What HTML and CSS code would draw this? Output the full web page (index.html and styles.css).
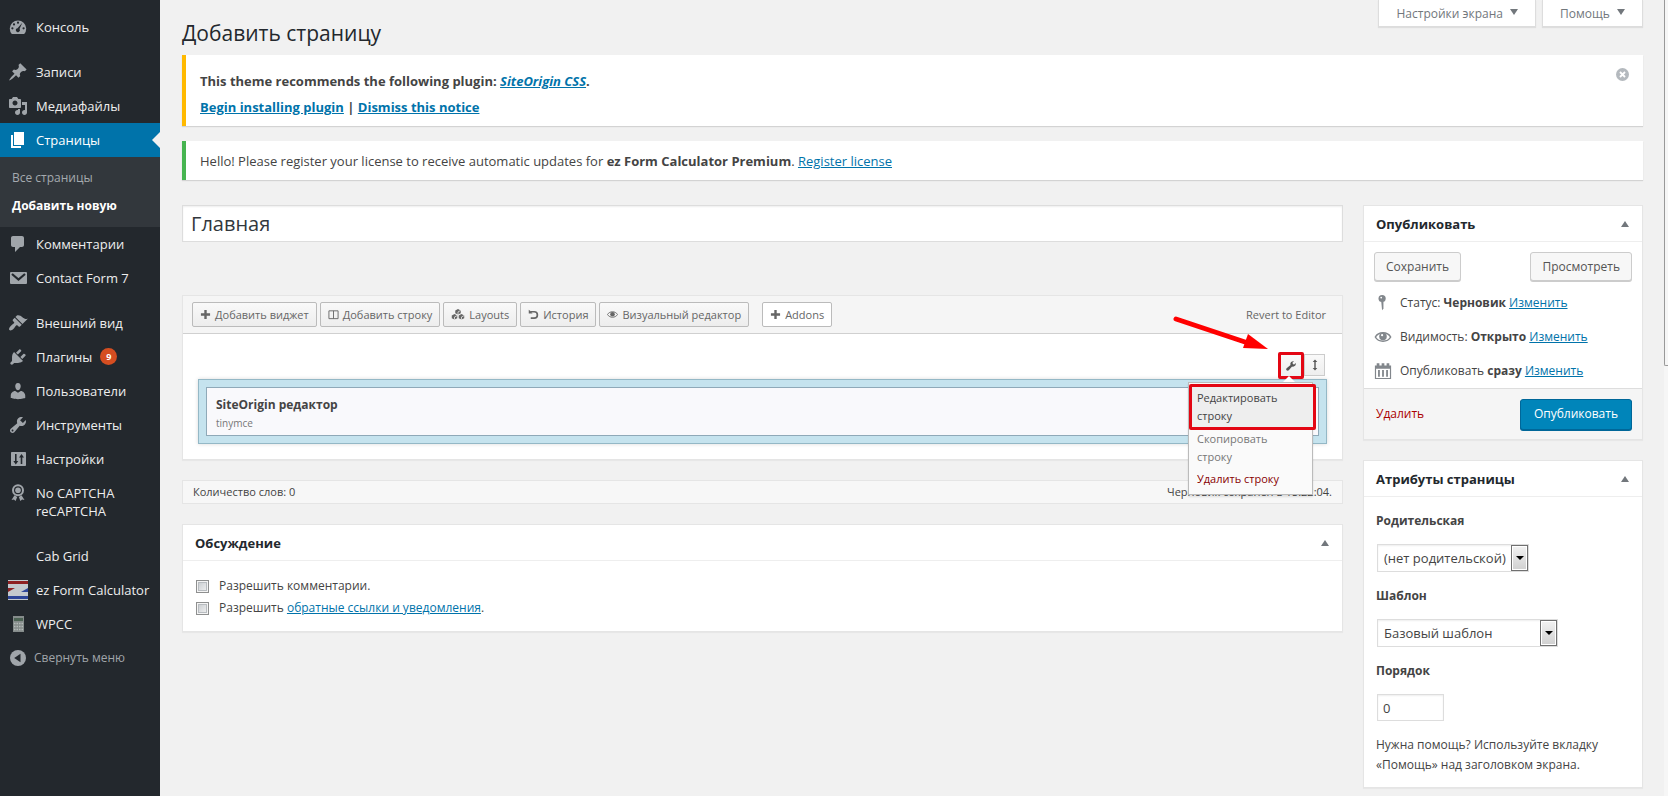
FILE: index.html
```html
<!DOCTYPE html>
<html lang="ru">
<head>
<meta charset="utf-8">
<title>Добавить страницу</title>
<link rel="stylesheet" href="styles.css">
</head>
<body>
<div class="layout">
  <nav class="sidebar" aria-label="Главное меню">
    <ul class="menu">
      <li><a class="menu-link" href="#"><svg class="icon" viewBox="0 0 20 20"><path fill-rule="evenodd" d="M3.8 17h12.4a8.2 8.2 0 1 0-12.4 0zM10 4.6a1.1 1.1 0 1 1 0 2.2 1.1 1.1 0 0 1 0-2.2zM6 6.3a1.1 1.1 0 1 1 0 2.2 1.1 1.1 0 0 1 0-2.2zM4.400 10.200a1.100 1.100 0 1 1 0 2.200 1.100 1.100 0 0 1 0-2.200zM15.600 10.200a1.100 1.100 0 1 1 0 2.200 1.100 1.100 0 0 1 0-2.200zM14.300 5.800l-2.800 6.200a2 2 0 1 1-2-.8z"/></svg><span>Консоль</span></a></li>
      <li class="group"><a class="menu-link" href="#"><svg class="icon" viewBox="0 0 20 20"><path d="M10.440 3.020l1.820-1.820 6.360 6.350-1.830 1.820c-1.050-.68-2.480-.57-3.410.36l-.75.75c-.92.93-1.040 2.350-.35 3.410l-1.830 1.820-2.410-2.410-2.800 2.790c-.42.42-3.380 2.710-3.800 2.290s1.860-3.390 2.280-3.810l2.790-2.790L4.100 9.360l1.830-1.820c1.050.69 2.480.57 3.400-.36l.75-.75c.93-.92 1.050-2.350.36-3.410z"/></svg><span>Записи</span></a></li>
      <li><a class="menu-link" href="#"><svg class="icon" viewBox="0 0 20 20"><path fill-rule="evenodd" d="M13 11V4c0-.55-.45-1-1-1h-1.670L9 1H5L3.670 3H2c-.55 0-1 .45-1 1v7c0 .55.45 1 1 1h10c.55 0 1-.45 1-1zM7 4.500c1.380 0 2.500 1.120 2.500 2.500S8.380 9.500 7 9.500 4.500 8.380 4.500 7 5.620 4.500 7 4.500zM14 6h5v10.500c0 1.380-1.120 2.500-2.500 2.500S14 17.880 14 16.500s1.120-2.500 2.500-2.500c.17 0 .34.02.5.05V9h-3V6zm-4 8.050V13h2v3.500c0 1.380-1.120 2.500-2.500 2.500S7 17.880 7 16.500 8.120 14 9.500 14c.17 0 .34.02.5.05z"/></svg><span>Медиафайлы</span></a></li>
      <li>
        <a class="menu-link current" href="#"><svg class="icon" viewBox="0 0 20 20"><path d="M6 15V2h10v13H6zm-1 1h8v2H3V5h2v11z"/></svg><span>Страницы</span></a>
        <ul class="submenu">
          <li><a href="#">Все страницы</a></li>
          <li><a class="active" href="#">Добавить новую</a></li>
        </ul>
      </li>
      <li><a class="menu-link" href="#"><svg class="icon" viewBox="0 0 20 20"><path d="M5 2h9c1.100 0 2 .9 2 2v7c0 1.100-.9 2-2 2h-2l-5 5v-5H5c-1.100 0-2-.9-2-2V4c0-1.100.9-2 2-2z"/></svg><span>Комментарии</span></a></li>
      <li><a class="menu-link" href="#"><svg class="icon" viewBox="0 0 20 20"><rect x="2" y="4" width="17" height="12" rx="1"/><path d="M4 6l6.500 5.500L17 6" fill="none" stroke="#23282d" stroke-width="2.200"/></svg><span>Contact Form 7</span></a></li>
      <li class="group"><a class="menu-link" href="#"><svg class="icon" viewBox="0 0 20 20"><path d="M14.480 11.060L7.410 3.990l1.500-1.500c.5-.56 2.300-.47 3.510.32 1.210.8 1.430 1.280 2.910 2.100 1.180.64 2.450 1.260 4.450.85zm-.71.71L6.700 4.700 4.930 6.470c-.39.39-.39 1.020 0 1.410l1.060 1.060c.39.39.39 1.030 0 1.420-.6.6-1.430 1.110-2.210 1.690-.35.26-.7.53-1.010.84C1.430 14.230.4 16.080 1.400 17.070c.99 1 2.840-.03 4.180-1.360.31-.31.58-.66.85-1.020.57-.78 1.080-1.610 1.690-2.210.39-.39 1.020-.39 1.410 0l1.060 1.060c.39.39 1.020.39 1.410 0z"/></svg><span>Внешний вид</span></a></li>
      <li><a class="menu-link" href="#"><svg class="icon" viewBox="0 0 20 20"><path d="M13.110 4.360L9.870 7.600 8 5.730l3.240-3.240c.35-.34 1.050-.2 1.560.32.52.51.66 1.210.31 1.550zm-8 1.770l.91-1.120 9.010 9.010-1.190.84c-.71.71-2.630 1.160-3.820 1.160H6.140L4.900 17.260c-.59.59-1.540.59-2.120 0-.59-.58-.59-1.530 0-2.120l1.240-1.240v-3.880c0-1.130.4-3.190 1.090-3.890zm7.260 3.970l3.240-3.240c.34-.35 1.040-.21 1.550.31.52.51.66 1.210.31 1.550l-3.240 3.250z"/></svg><span>Плагины</span><span class="badge">9</span></a></li>
      <li><a class="menu-link" href="#"><svg class="icon" viewBox="0 0 20 20"><path d="M10 9.250c-2.270 0-2.730-3.440-2.730-3.440C7 4.020 7.820 2 9.970 2c2.160 0 2.980 2.020 2.710 3.810 0 0-.41 3.440-2.680 3.440zm0 2.570L12.720 10c2.390 0 4.520 2.330 4.520 4.530v2.490s-3.650 1.130-7.240 1.130c-3.650 0-7.240-1.130-7.240-1.130v-2.490c0-2.250 1.940-4.480 4.470-4.480z"/></svg><span>Пользователи</span></a></li>
      <li><a class="menu-link" href="#"><svg class="icon" viewBox="0 0 20 20"><path fill-rule="evenodd" d="M16.680 9.770c-1.340 1.340-3.300 1.670-4.950.99l-5.410 6.520c-.99.99-2.590.99-3.580 0s-.99-2.590 0-3.570l6.520-5.420c-.68-1.650-.35-3.610.99-4.950 1.280-1.280 3.120-1.620 4.720-1.060l-2.890 2.890 2.820 2.820 2.860-2.870c.53 1.580.18 3.390-1.080 4.650zM3.810 16.210c.4.39 1.040.39 1.430 0 .4-.4.4-1.040 0-1.430-.39-.4-1.030-.4-1.430 0-.39.39-.39 1.030 0 1.430z"/></svg><span>Инструменты</span></a></li>
      <li><a class="menu-link" href="#"><svg class="icon" viewBox="0 0 20 20"><path fill-rule="evenodd" d="M18 16V4c0-.55-.45-1-1-1H4c-.55 0-1 .45-1 1v12c0 .55.45 1 1 1h13c.55 0 1-.45 1-1zM7 5h1.600v7h1.700l-2.500 3.500L5.300 12H7zM12.700 15V8.500H11L13.500 5 16 8.500h-1.700V15z"/></svg><span>Настройки</span></a></li>
      <li><a class="menu-link" href="#"><svg class="icon" viewBox="0 0 20 20"><circle cx="10" cy="7.200" r="5" fill="none" stroke="currentColor" stroke-width="2"/><circle cx="10" cy="7.200" r="2.800"/><path d="M6.500 12.300l2.700 1.600L7.600 18l-1.700-1.400L3.500 17zM13.500 12.300l-2.700 1.600 1.600 4.100 1.700-1.400 2.400.4z"/></svg><span>No CAPTCHA reCAPTCHA</span></a></li>
      <li class="group"><a class="menu-link" href="#"><span class="icon"></span><span>Cab Grid</span></a></li>
      <li><a class="menu-link" href="#"><svg class="icon" viewBox="0 0 20 20"><path fill="#c3c9ce" d="M0 0h20v20H0z"/><path fill="#8e2022" d="M0 1h20v3H0zM0 8h7l-7 4z"/><path fill="#2c4598" d="M0 16h20v3H0zM20 8v4h-7z"/></svg><span>ez Form Calculator</span></a></li>
      <li><a class="menu-link" href="#"><svg class="icon" viewBox="0 0 20 20"><path fill="#858c8b" d="M5 2h11v16H5z"/><path fill="#4c6354" d="M6 4h9v3H6z"/><path d="M6 9.500h9M6 12.500h9M6 15.500h9" stroke="#b4bab9" stroke-width="1.500" stroke-dasharray="1.500 1"/></svg><span>WPCC</span></a></li>
    </ul>
    <button class="menu-link collapse" type="button"><svg class="icon" viewBox="0 0 20 20"><circle cx="10" cy="10" r="8"/><path d="M12.500 5.800v8.400L6.200 10z" fill="#23282d"/></svg><span>Свернуть меню</span></button>
  </nav>

  <main class="content">
    <header class="page-head">
      <h1>Добавить страницу</h1>
      <div class="screen-links">
        <button type="button">Настройки экрана <i class="tri down"></i></button>
        <button type="button">Помощь <i class="tri down"></i></button>
      </div>
    </header>

    <section class="notice warning">
      <div>
        <p>This theme recommends the following plugin: <a href="#"><em>SiteOrigin CSS</em></a>.</p>
        <p><a href="#">Begin installing plugin</a> | <a href="#">Dismiss this notice</a></p>
      </div>
      <button class="dismiss" type="button" aria-label="Скрыть"><svg viewBox="0 0 14 14"><circle cx="7" cy="7" r="7"/><path d="M4.300 4.300l5.400 5.400M9.700 4.300L4.300 9.700" stroke="#fff" stroke-width="2"/></svg></button>
    </section>
    <section class="notice success">
      <p>Hello! Please register your license to receive automatic updates for <strong>ez Form Calculator Premium</strong>. <a href="#">Register license</a></p>
    </section>

    <div class="columns">
      <div class="primary">
        <input class="title-input" type="text" value="Главная" aria-label="Заголовок">

        <section class="builder">
          <div class="toolbar">
            <button type="button"><svg viewBox="0 0 12 12"><path d="M4.700 1h2.600v3.700H11v2.600H7.300V11H4.700V7.300H1V4.700h3.700z"/></svg>Добавить виджет</button>
            <button type="button"><svg viewBox="0 0 12 12"><path d="M1 2h10v8.500H1zM6 2v8.500" fill="none" stroke="currentColor"/></svg>Добавить строку</button>
            <button type="button"><svg class="wide" viewBox="0 0 14 12"><path d="M7 0l3 1.500v3L7 6 4 4.500v-3zM3.200 5.500l3 1.500v3l-3 1.500-3-1.500V7zM10.800 5.500l3 1.500v3l-3 1.500-3-1.500V7z"/><path d="M7 3.200l2.800-1.500M7 3.200V6M3.200 8.700L6 7.200M3.200 8.700v2.800M10.800 8.700l2.800-1.500M10.800 8.700v2.800" fill="none" stroke="#f7f7f7" stroke-width=".8"/></svg>Layouts</button>
            <button type="button"><svg viewBox="0 0 12 12"><path d="M2.500 3h4.300a3.400 3.400 0 0 1 0 6.900H3" fill="none" stroke="currentColor" stroke-width="1.800"/><path d="M.8.8l1.500 1L5 4.800H.8z"/></svg>История</button>
            <button type="button"><svg viewBox="0 0 12 12"><path d="M.5 6C3 2 9 2 11.500 6 9 10 3 10 .5 6z" fill="none" stroke="currentColor"/><circle cx="6" cy="5.700" r="2.500"/></svg>Визуальный редактор</button>
            <button class="plain" type="button"><svg viewBox="0 0 12 12"><path d="M4.700 1h2.600v3.700H11v2.600H7.300V11H4.700V7.300H1V4.700h3.700z"/></svg>Addons</button>
            <a class="revert" href="#">Revert to Editor</a>
          </div>
          <div class="canvas">
            <div class="row-tools">
              <button class="wrench" type="button" aria-label="Параметры строки"><svg viewBox="0 0 20 20"><path d="M16.680 9.770c-1.340 1.340-3.300 1.670-4.950.99l-5.410 6.520c-.99.99-2.590.99-3.580 0s-.99-2.590 0-3.570l6.520-5.420c-.68-1.650-.35-3.610.99-4.950 1.280-1.280 3.120-1.620 4.720-1.060l-2.890 2.890 2.820 2.820 2.860-2.870c.53 1.580.18 3.390-1.080 4.650z"/></svg></button>
              <button type="button" aria-label="Переместить строку"><svg viewBox="0 0 12 12"><path d="M6 .5l2.300 2.500H6.700v6h1.600L6 11.500 3.700 9h1.600V3H3.700z"/></svg></button>
              <div class="dropdown">
                <a class="highlight" href="#">Редактировать строку</a>
                <a href="#">Скопировать строку</a>
                <a class="danger" href="#">Удалить строку</a>
              </div>
              <svg class="arrow" viewBox="0 0 96 38"><path d="M3 4l72 24" stroke="#f00" stroke-width="5" stroke-linecap="round"/><path d="M75 19l20 15-25-1z" fill="#f00"/></svg>
            </div>
            <div class="row">
              <article class="widget">
                <h3>SiteOrigin редактор</h3>
                <p>tinymce</p>
              </article>
            </div>
          </div>
        </section>

        <div class="status-bar"><span>Количество слов: 0</span><span>Черновик сохранён в 15:22:04.</span></div>

        <section class="box">
          <h2>Обсуждение <i class="tri up"></i></h2>
          <div class="discussion">
            <div><input type="checkbox" id="comments"><label for="comments">Разрешить комментарии.</label></div>
            <div><input type="checkbox" id="pings"><label for="pings">Разрешить <a href="#">обратные ссылки и уведомления</a>.</label></div>
          </div>
        </section>
      </div>

      <aside class="secondary">
        <section class="box">
          <h2>Опубликовать <i class="tri up"></i></h2>
          <div class="publish">
            <div class="actions"><button class="btn" type="button">Сохранить</button><button class="btn" type="button">Просмотреть</button></div>
            <p><svg viewBox="0 0 20 20"><circle cx="9" cy="5" r="4"/><circle cx="8" cy="4" r="1" fill="#fff"/><path d="M8 8h2.500v8L9 18z"/></svg><span>Статус: <strong>Черновик</strong> <a href="#">Изменить</a></span></p>
            <p><svg viewBox="0 0 20 20"><path d="M1.500 10c3.500-6.300 13.500-6.300 17 0-3.500 6.300-13.500 6.300-17 0z" fill="none" stroke="currentColor" stroke-width="1.700"/><circle cx="10" cy="9.500" r="4.200"/><circle cx="9" cy="8" r="1.200" fill="#fff"/></svg><span>Видимость: <strong>Открыто</strong> <a href="#">Изменить</a></span></p>
            <p><svg viewBox="0 0 20 20"><path fill-rule="evenodd" d="M1 4h2V1.500h3V4h2.500V1.500h3V4H14V1.500h3V4h2v15H1zM2.300 7.500v10.200h15.400V7.500z"/><path d="M4.500 9h2v7.500h-2zM9 9h2v7.500H9zM13.500 9h2v7.500h-2z"/></svg><span>Опубликовать <strong>сразу</strong> <a href="#">Изменить</a></span></p>
          </div>
          <footer class="publish-foot"><a href="#">Удалить</a><button class="btn primary-btn" type="button">Опубликовать</button></footer>
        </section>

        <section class="box">
          <h2>Атрибуты страницы <i class="tri up"></i></h2>
          <div class="attributes">
            <label for="parent">Родительская</label>
            <span class="select"><select id="parent"><option>(нет родительской)</option></select><i></i></span>
            <label for="template">Шаблон</label>
            <span class="select long"><select id="template"><option>Базовый шаблон</option></select><i></i></span>
            <label for="order">Порядок</label>
            <input id="order" type="text" value="0">
            <p>Нужна помощь? Используйте вкладку «Помощь» над заголовком экрана.</p>
          </div>
        </section>
      </aside>
    </div>
  </main>
  <div class="scroll-edge"><div></div></div>
</div>
</body>
</html>
```
FILE: styles.css
```css
* { box-sizing: border-box; }
body {
  margin: 0;
  background: #f1f1f1;
  color: #444;
  font: 12px/18px "Open Sans", "Noto Sans", sans-serif;
}
h1, h2, h3, p, ul { margin: 0; padding: 0; font-weight: 400; }
ul { list-style: none; }
button, input, select { font: inherit; color: inherit; margin: 0; }
a { color: #0073aa; }
svg { fill: currentColor; flex: none; }
strong { font-weight: 700; }

.layout { display: flex; min-height: 100vh; }

/* Sidebar */
.sidebar { width: 160px; flex: none; background: #23282d; padding-top: 10px; }
.menu-link {
  display: flex;
  align-items: flex-start;
  gap: 8px;
  min-height: 34px;
  padding: 8px 4px 8px 8px;
  color: #eee;
  text-decoration: none;
  font-size: 13px;
  position: relative;
}
.group { margin-top: 11px; }
.icon { width: 20px; height: 20px; flex: none; color: #a0a5aa; margin: -1px 0; }
.current { background: #0073aa; color: #fff; }
.current .icon { color: #fff; }
.current::after {
  content: "";
  position: absolute;
  right: 0;
  top: 9px;
  border: 8px solid transparent;
  border-right-color: #f1f1f1;
  border-left: 0;
}
.submenu { background: #32373c; padding: 7px 0; }
.submenu a { display: block; padding: 5px 12px; color: #a5aaaf; text-decoration: none; }
.submenu .active { color: #fff; font-weight: 700; }
.badge {
  width: 17px;
  height: 17px;
  border-radius: 50%;
  background: #d54e21;
  color: #fff;
  font-size: 9px;
  line-height: 17px;
  font-weight: 700;
  text-align: center;
}
.collapse { border: 0; background: none; width: 100%; color: #a0a5aa; font-size: 12px; gap: 6px; text-align: left; }

/* Content */
.content { flex: 1; min-width: 0; padding: 0 21px 7px 22px; }
.page-head { display: flex; justify-content: space-between; align-items: flex-start; }
h1 { padding-top: 19px; font-size: 21px; line-height: 29px; height: 55px; color: #23282d; }
.screen-links { display: flex; gap: 6px; }
.screen-links button {
  height: 27px;
  padding: 2px 17px 0;
  border: 1px solid #ddd;
  border-top: 0;
  background: #fff;
  color: #72777c;
  box-shadow: 0 1px 1px rgba(0, 0, 0, .08);
}
.tri { display: inline-block; border: 4px solid transparent; }
.down { border-top: 6px solid #72777c; border-bottom: 0; margin: 0 0 3px 4px; }
.up { border-bottom: 6px solid #72777c; border-top: 0; }

.notice {
  display: flex;
  justify-content: space-between;
  background: #fff;
  border-left: 4px solid #ffb900;
  box-shadow: 0 1px 1px rgba(0, 0, 0, .12);
  padding: 11px 14px 10px;
  margin-bottom: 15px;
  font-size: 13px;
}
.warning { padding-top: 17px; }
.warning p { font-weight: 700; }
.warning p + p { margin-top: 8px; }
.success { border-color: #46b450; margin-bottom: 25px; }
.dismiss { align-self: flex-start; border: 0; padding: 0; background: none; color: #b4b9be; height: 13px; margin-top: -4px; }
.dismiss svg { width: 13px; height: 13px; display: block; }

.columns { display: flex; gap: 20px; align-items: flex-start; }
.primary { flex: 1; min-width: 0; }
.secondary { width: 280px; flex: none; }

.title-input {
  display: block;
  width: 100%;
  height: 37px;
  padding: 0 8px;
  border: 1px solid #ddd;
  background: #fff;
  color: #32373c;
  font-size: 20px;
  box-shadow: inset 0 1px 2px rgba(0, 0, 0, .07);
}

/* Page builder */
.builder { margin-top: 53px; border: 1px solid #e5e5e5; background: #fff; box-shadow: 0 1px 1px rgba(0, 0, 0, .04); }
.toolbar {
  display: flex;
  align-items: center;
  gap: 3px;
  height: 38px;
  padding: 0 16px 0 9px;
  background: #f5f5f5;
  border-bottom: 1px solid #d0d0d0;
}
.toolbar button {
  display: flex;
  align-items: center;
  gap: 4px;
  height: 25px;
  padding: 0 7px;
  border: 1px solid #bbb;
  border-radius: 2px;
  background: linear-gradient(#f9f9f9, #ededed);
  color: #666;
  font-size: 11px;
}
.toolbar svg { width: 11px; height: 11px; }
.toolbar .wide { width: 14px; }
.toolbar .plain { background: #fff; margin-left: 10px; }
.revert { margin-left: auto; color: #666; font-size: 11px; text-decoration: none; }
.canvas { padding: 20px 15px 15px; }
.row-tools { position: relative; display: flex; justify-content: flex-end; padding-right: 2px; margin-bottom: 3px; }
.row-tools button {
  display: flex;
  align-items: center;
  justify-content: center;
  width: 21px;
  height: 22px;
  padding: 0;
  border: 1px solid #ccc;
  background: linear-gradient(#f9f9f9, #eee);
  color: #555;
}
.row-tools button svg { width: 12px; height: 12px; }
.row-tools .wrench { width: 26px; height: 27px; margin: -2px 0 -3px; border: 3px solid #e30613; border-radius: 2px; }
.dropdown {
  position: absolute;
  z-index: 2;
  top: 28px;
  right: 14px;
  width: 125px;
  padding-bottom: 2px;
  border: 1px solid #bbb;
  background: #fafafa;
  box-shadow: 0 2px 2px rgba(0, 0, 0, .1);
}
.dropdown::before {
  content: "";
  position: absolute;
  top: -7px;
  left: 94px;
  border: 6px solid transparent;
  border-bottom-color: #fff;
  border-top: 0;
}
.dropdown a { display: block; padding: 0 8px 4px; color: #777; font-size: 11px; text-decoration: none; }
.dropdown .highlight {
  margin: 1px -4px 0 0;
  padding: 2px 5px;
  border: 3px solid #e30613;
  border-radius: 2px;
  background: #eee;
  color: #444;
}
.dropdown .danger { color: #800; }
.arrow { position: absolute; top: -39px; right: 58px; width: 96px; height: 38px; }
.row { padding: 7px; background: #c5e3ee; border: 1px solid #94b8c6; box-shadow: 0 0 4px rgba(0, 0, 0, .15); }
.widget { padding: 7px 9px 4px; background: #f9f9fc; border: 1px solid #8fa9b8; }
.widget h3 { font-size: 12px; font-weight: 700; line-height: 20px; }
.widget p { font-size: 10px; color: #777; line-height: 16px; }

.status-bar {
  display: flex;
  justify-content: space-between;
  margin: 20px 0;
  padding: 2px 10px;
  border: 1px solid #e5e5e5;
  background: #f7f7f7;
  font-size: 11px;
}

/* Boxes */
.box { border: 1px solid #e5e5e5; background: #fff; box-shadow: 0 1px 1px rgba(0, 0, 0, .04); margin-bottom: 20px; }
.box:last-child { margin-bottom: 0; }
.box h2 {
  display: flex;
  align-items: center;
  justify-content: space-between;
  height: 36px;
  padding: 0 13px 0 12px;
  border-bottom: 1px solid #eee;
  color: #23282d;
  font-size: 13px;
  font-weight: 700;
}
.discussion { padding: 14px 13px 12px; }
.discussion div { display: flex; align-items: center; gap: 10px; height: 22px; }
.discussion input {
  appearance: none;
  width: 13px;
  height: 13px;
  border: 1px solid #8e8f8f;
  background: linear-gradient(135deg, #c4c8cc, #f4f4f4);
  box-shadow: inset 0 0 0 1px #f4f4f4, inset 0 0 0 2px #b8bcc0;
}

.publish { padding: 10px 10px 0; }
.actions { display: flex; justify-content: space-between; margin-bottom: 5px; }
.btn { height: 29px; padding: 0 11px; border: 1px solid #ccc; border-radius: 3px; background: #f7f7f7; color: #555; box-shadow: 0 1px 0 #ccc; }
.publish p { display: flex; align-items: center; gap: 8px; height: 34px; }
.publish svg { width: 18px; height: 18px; color: #82878c; }
.publish-foot {
  display: flex;
  align-items: center;
  justify-content: space-between;
  height: 51px;
  padding: 0 10px 0 12px;
  background: #f5f5f5;
  border-top: 1px solid #ddd;
}
.publish-foot a { color: #a00; text-decoration: none; }
.primary-btn { height: 31px; padding: 0 13px; border-color: #006799; background: #0085ba; color: #fff; box-shadow: 0 1px 0 #006799; }

.attributes { display: flex; flex-direction: column; align-items: flex-start; padding: 15px 12px 12px; }
.attributes label { font-weight: 700; margin-bottom: 14px; }
.select { position: relative; width: 152px; margin: 0 0 15px 1px; font-size: 13px; }
.long { width: 181px; }
.select select {
  display: block;
  appearance: none;
  width: 100%;
  height: 28px;
  padding: 0 6px;
  border: 1px solid #ddd;
  border-radius: 0;
  background: #fff;
  box-shadow: inset 0 1px 2px rgba(0, 0, 0, .07);
}
.select i {
  position: absolute;
  top: 1px;
  right: 1px;
  bottom: 1px;
  width: 17px;
  border: 1px solid #707070;
  background: linear-gradient(#f2f2f2, #d0d0d0);
  box-shadow: inset 0 0 0 1px #fff;
  pointer-events: none;
}
.select i::after {
  content: "";
  position: absolute;
  top: 10px;
  left: 4px;
  border: 4px solid transparent;
  border-top-color: #000;
  border-bottom: 0;
}
.attributes input {
  width: 67px;
  height: 27px;
  margin: 0 0 14px 1px;
  padding: 0 5px;
  border: 1px solid #ddd;
  background: #fff;
  font-size: 13px;
  box-shadow: inset 0 1px 2px rgba(0, 0, 0, .07);
}
.attributes p { line-height: 20px; }

.scroll-edge { width: 4px; flex: none; background: #f6f6f6; }
.scroll-edge div { height: 366px; border: 1px solid #999; border-width: 0 0 1px 1px; border-bottom-left-radius: 2px; }
```
